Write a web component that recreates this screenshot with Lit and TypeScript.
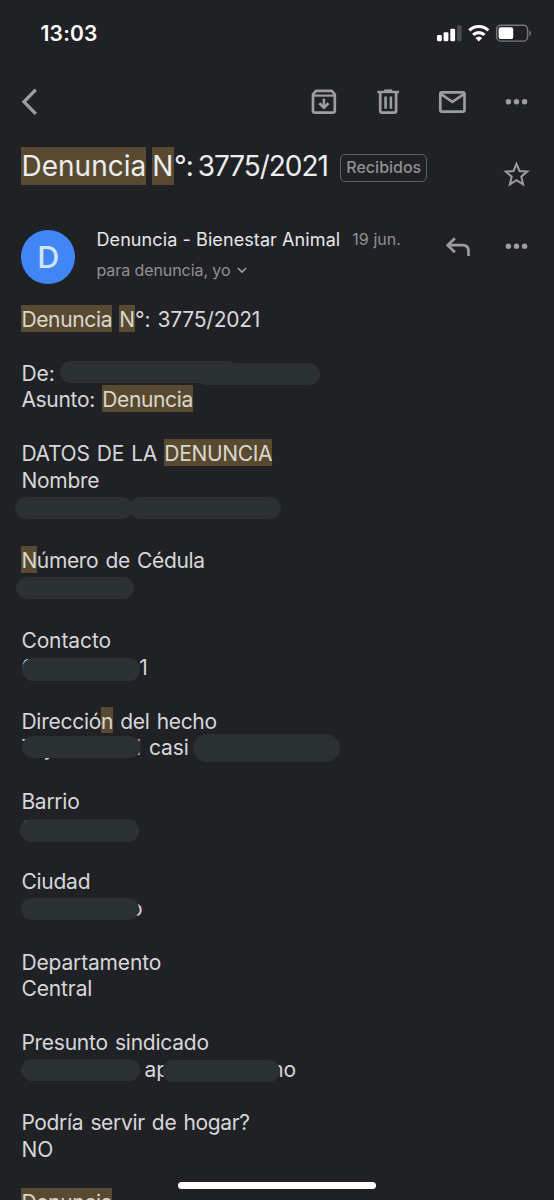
import { LitElement, html, svg, css, nothing } from "lit";
import { customElement } from "lit/decorators.js";
import { styleMap } from "lit/directives/style-map.js";

/** A run of text: ls = letter spacing, gap = blank space in front of it. */
interface Run {
  t: string;
  hit?: boolean;
  ls?: number;
  gap?: number;
}
/** A pill that hides part of a line, relative to the line's own box. */
interface Blot {
  x: number;
  y: number;
  w: number;
  h: number;
}
interface Line {
  runs?: Run[];
  blots?: Blot[];
}

const blank: Line = {};
const text = (t: string, ls = -0.25): Line => ({ runs: [{ t, ls }] });

const LINES: Line[] = [
  {
    runs: [
      { t: "Denuncia", hit: true, ls: -0.35 },
      { t: "N", hit: true, ls: -0.1, gap: 7.2 },
      { t: "°: 3775/2021", ls: -0.22 },
    ],
  },
  blank,
  {
    runs: [{ t: "De:", ls: 0 }, { t: ".", ls: 0, gap: 7.6 }],
    blots: [
      { x: 60, y: 2.3, w: 178, h: 22 },
      { x: 196, y: 4.2, w: 123.5, h: 22 },
    ],
  },
  { runs: [{ t: "Asunto: ", ls: -0.3 }, { t: "Denuncia", hit: true, ls: -0.35 }] },
  blank,
  { runs: [{ t: "DATOS DE LA ", ls: -0.28 }, { t: "DENUNCIA", hit: true, ls: -0.32 }] },
  text("Nombre"),
  {
    blots: [
      { x: 14.5, y: 4.3, w: 118.5, h: 22.2 },
      { x: 128.5, y: 4.3, w: 152.5, h: 22.2 },
    ],
  },
  blank,
  { runs: [{ t: "N", hit: true, ls: -0.4 }, { t: "úmero de Cédula", ls: -0.34 }] },
  { blots: [{ x: 15.7, y: 4.2, w: 118.5, h: 22 }] },
  blank,
  text("Contacto", -0.1),
  {
    runs: [{ t: "0", ls: 0 }, { t: "1", ls: 0, gap: 104.5 }],
    blots: [{ x: 21.5, y: 5.2, w: 118.5, h: 22.3 }],
  },
  blank,
  {
    runs: [
      { t: "Direcció", ls: -0.25 },
      { t: "n", hit: true, ls: -0.4 },
      { t: " del hecho", ls: -0.33 },
    ],
  },
  {
    runs: [
      { t: "T", ls: 0 },
      { t: "y", ls: 0, gap: 8.5 },
      { t: "l", ls: 0, gap: 80.8 },
      { t: "casi", ls: -0.1, gap: 7.8 },
    ],
    blots: [
      { x: 21.5, y: 2.5, w: 119, h: 22.3 },
      { x: 192.5, y: 0.7, w: 147.5, h: 27.5 },
    ],
  },
  blank,
  text("Barrio", -0.27),
  { runs: [{ t: "S", ls: 0 }], blots: [{ x: 19.5, y: 5.7, w: 119, h: 22.3 }] },
  blank,
  text("Ciudad"),
  {
    runs: [{ t: "o", ls: 0, gap: 108.7 }],
    blots: [{ x: 20.8, y: 3.7, w: 118.5, h: 22.5 }],
  },
  blank,
  text("Departamento", -0.15),
  text("Central", -0.1),
  blank,
  text("Presunto sindicado"),
  {
    runs: [{ t: "ap", ls: -0.1, gap: 123.2 }, { t: "no", ls: -0.1, gap: 102.2 }],
    blots: [
      { x: 21, y: 3.9, w: 118.5, h: 22.2 },
      { x: 161.5, y: 4.9, w: 118, h: 22.2 },
    ],
  },
  blank,
  text("Podría servir de hogar?", -0.34),
  text("NO", 0),
  blank,
  { runs: [{ t: "Denuncia", hit: true, ls: -0.35 }] },
];

const dots = (cy: number) => svg`
  <circle cx="508.4" cy=${cy} r="2.7"/><circle cx="516.5" cy=${cy} r="2.7"/><circle cx="524.6" cy=${cy} r="2.7"/>`;

@customElement("mail-line")
class MailLine extends LitElement {
  static properties = { line: { attribute: false } };
  declare line: Line;

  static styles = css`
    :host {
      display: block;
      position: relative;
      height: 26.78px;
      line-height: 26.78px;
      padding-left: 21.4px;
      white-space: pre;
      word-spacing: 1.6px;
    }
    .run {
      display: inline-block;
      height: 26.78px;
      line-height: 30.2px;
      vertical-align: top;
    }
    .hit {
      background: #574a31;
      color: #dcd7cd;
    }
    .blot {
      position: absolute;
      background: #2b3033;
      border-radius: 14px;
    }
  `;

  render() {
    const { runs, blots } = this.line;
    return html`${runs?.map(
      (r) =>
        html`<span
          class="run ${r.hit ? "hit" : ""}"
          style=${styleMap({
            letterSpacing: `${r.ls ?? 0}px`,
            marginLeft: r.gap ? `${r.gap}px` : undefined,
          })}
          >${r.t}</span
        >`
    ) ?? nothing}${blots?.map(
      (b) =>
        html`<span
          class="blot"
          style=${styleMap({
            left: `${b.x}px`,
            top: `${b.y}px`,
            width: `${b.w}px`,
            height: `${b.h}px`,
          })}
        ></span>`
    ) ?? nothing}`;
  }
}

@customElement("app-root")
class AppRoot extends LitElement {
  static styles = css`
    :host {
      display: block;
      position: relative;
      width: 554px;
      height: 1200px;
      overflow: hidden;
      background: #202124;
      color: #d6d7da;
      font-family: Inter, "Liberation Sans", sans-serif;
      -webkit-font-smoothing: antialiased;
    }
    svg {
      display: block;
      flex: none;
    }
    .ico {
      fill: none;
      stroke: #9b9da1;
      stroke-width: 2.7;
    }
    .back {
      stroke-width: 3.3;
    }
    .star {
      margin: 13px 0 0 auto;
      stroke-width: 2;
    }
    .caret {
      stroke-width: 1.7;
    }
    .fill {
      fill: #9b9da1;
      stroke: none;
    }
    .status {
      display: flex;
      align-items: center;
      justify-content: space-between;
      height: 67px;
      padding: 0 22px 0 40.5px;
    }
    .time {
      color: #fff;
      font-size: 21px;
      font-weight: 600;
      letter-spacing: 0.2px;
    }
    .toolbar {
      display: flex;
      align-items: center;
      height: 70px;
      padding: 0 24px 0 20px;
    }
    .spacer {
      flex: 1;
    }
    .subject {
      display: flex;
      padding: 10px 23px 0 21.4px;
      height: 38px;
      line-height: 38px;
      font-size: 28px;
      color: #ecedef;
    }
    .mark {
      background: #574a31;
    }
    .word {
      width: 125px;
      margin-right: 5.9px;
      letter-spacing: 0.03px;
    }
    .initial {
      width: 21.7px;
    }
    .number {
      letter-spacing: -1.05px;
      word-spacing: -1.8px;
      width: 166.3px;
      white-space: pre;
    }
    .label {
      box-sizing: border-box;
      width: 87px;
      height: 27.5px;
      margin-top: 7px;
      border: 1.4px solid #5c5e62;
      border-radius: 5px;
      text-align: center;
      font-size: 16px;
      font-weight: 500;
      line-height: 25.5px;
      color: #8f9195;
    }
    .sender {
      display: flex;
      height: 78.2px;
      padding: 42px 24px 0 21.3px;
      box-sizing: content-box;
    }
    .avatar {
      width: 53.7px;
      height: 53.7px;
      margin-top: 3.2px;
      border-radius: 50%;
      background: #4285f4;
      color: #d5e4fd;
      font-size: 30.5px;
      font-weight: 500;
      line-height: 54px;
      text-align: center;
    }
    .who {
      margin-left: 21.5px;
    }
    .from {
      display: flex;
      height: 31px;
      line-height: 25px;
      font-size: 18px;
      letter-spacing: 0.09px;
      color: #e6e7ea;
      white-space: nowrap;
    }
    .date {
      margin-left: 12px;
      font-size: 16px;
      letter-spacing: 0.05px;
      color: #8f9195;
    }
    .to {
      display: flex;
      align-items: center;
      gap: 6px;
      height: 24px;
      font-size: 16px;
      letter-spacing: -0.08px;
      color: #8f9195;
    }
    .body {
      font-size: 21px;
    }
    .home {
      position: absolute;
      left: 178px;
      top: 1182.3px;
      width: 198px;
      height: 7.2px;
      border-radius: 4px;
      background: #fff;
    }
  `;

  render() {
    return html`
      <div class="status">
        <span class="time">13:03</span>
        <svg width="96" height="19" viewBox="436 24 96 19">
          <g fill="#fff">
            <rect x="437" y="35" width="4.8" height="6.2" rx="1.1" />
            <rect x="443.6" y="32.2" width="4.8" height="9" rx="1.1" />
            <rect x="450.3" y="28.8" width="4.8" height="12.4" rx="1.1" />
            <rect x="457" y="25.3" width="4.8" height="15.9" rx="1.1" fill="#4a4b4e" />
            <path d="M478.8 41.4 475.4 38a5 5 0 0 1 6.8 0Z" />
            <rect x="498.6" y="27.3" width="14.6" height="11.8" rx="2.2" />
          </g>
          <g fill="none" stroke="#fff" stroke-width="3.1">
            <path d="M469.3 30.4a13.5 13.5 0 0 1 19 0" />
            <path d="M473.1 34.9a8.2 8.2 0 0 1 11.4 0" />
          </g>
          <rect x="496.6" y="25.3" width="31" height="15.8" rx="4.3" fill="none" stroke="#77787b" stroke-width="1.4" />
          <path d="M529.3 30.6v5.4c2.2-.9 2.2-4.5 0-5.4Z" fill="#77787b" />
        </svg>
      </div>

      <div class="toolbar">
        <svg class="ico back" width="20" height="30" viewBox="20 87 20 30">
          <path d="M35.8 89.7 24 101.8 35.8 113.9" />
        </svg>
        <span class="spacer"></span>
        <svg width="222" height="30" viewBox="308 87 222 30">
          <g class="ico">
            <path d="M313 94.3v16.2q0 2.2 2.2 2.2h17.4q2.2 0 2.2-2.2V94.3l-2.3-2.7q-.5-.7-1.5-.7h-14.2q-1 0-1.5.7Z" stroke-linejoin="round" />
            <path d="M313 95.6h21.8" stroke-width="2.2" />
            <path d="M323.9 98.6v8.4" stroke-width="2.6" />
            <path d="M319.3 103.2l4.6 4.5 4.6-4.5" stroke-width="2.7" />
            <path d="M380.2 92.8v18q0 1.9 1.9 1.9h12.1q1.9 0 1.9-1.9v-18" />
            <path d="M377.3 92h21.7" stroke-width="2.4" />
            <path d="M384.2 90.4h8" stroke-width="2" />
            <path d="M385.6 96.5v12.2M390.9 96.5v12.2" stroke-width="2.6" />
            <rect x="440.3" y="92.3" width="24.2" height="19.4" rx="1.6" />
            <path d="M440.6 93.8 452.4 101.9 464.2 93.8" />
          </g>
          <g class="fill">${dots(101.8)}</g>
        </svg>
      </div>

      <div class="subject">
        <span class="mark word">Denuncia</span>
        <span class="mark initial">N</span>
        <span class="number">°: 3775/2021</span>
        <span class="label">Recibidos</span>
        <svg class="ico star" width="29" height="28" viewBox="502 160 29 28">
          <path
            d="M516.5 163.8 519.5 171 527.2 171.6 521.3 176.7 523.1 184.3 516.5 180.2 509.9 184.3 511.7 176.7 505.8 171.6 513.5 171Z"
          />
        </svg>
      </div>

      <div class="sender">
        <div class="avatar">D</div>
        <div class="who">
          <div class="from">
            <span>Denuncia - Bienestar Animal</span><span class="date">19 jun.</span>
          </div>
          <div class="to">
            <span>para denuncia, yo</span>
            <svg class="ico caret" width="12" height="8" viewBox="0 0 12 8">
              <path d="M1.8 2 6 6.1 10.2 2" />
            </svg>
          </div>
        </div>
        <span class="spacer"></span>
        <svg width="86" height="30" viewBox="444 227 86 30">
          <g class="ico">
            <path d="M454.9 238.3 447.7 245.2 454.9 252.2" />
            <path d="M448 245.2h14.5q6 0 6 6v4.8" />
          </g>
          <g class="fill">${dots(246.3)}</g>
        </svg>
      </div>

      <div class="body">${LINES.map((l) => html`<mail-line .line=${l}></mail-line>`)}</div>
      <div class="home"></div>
    `;
  }
}
